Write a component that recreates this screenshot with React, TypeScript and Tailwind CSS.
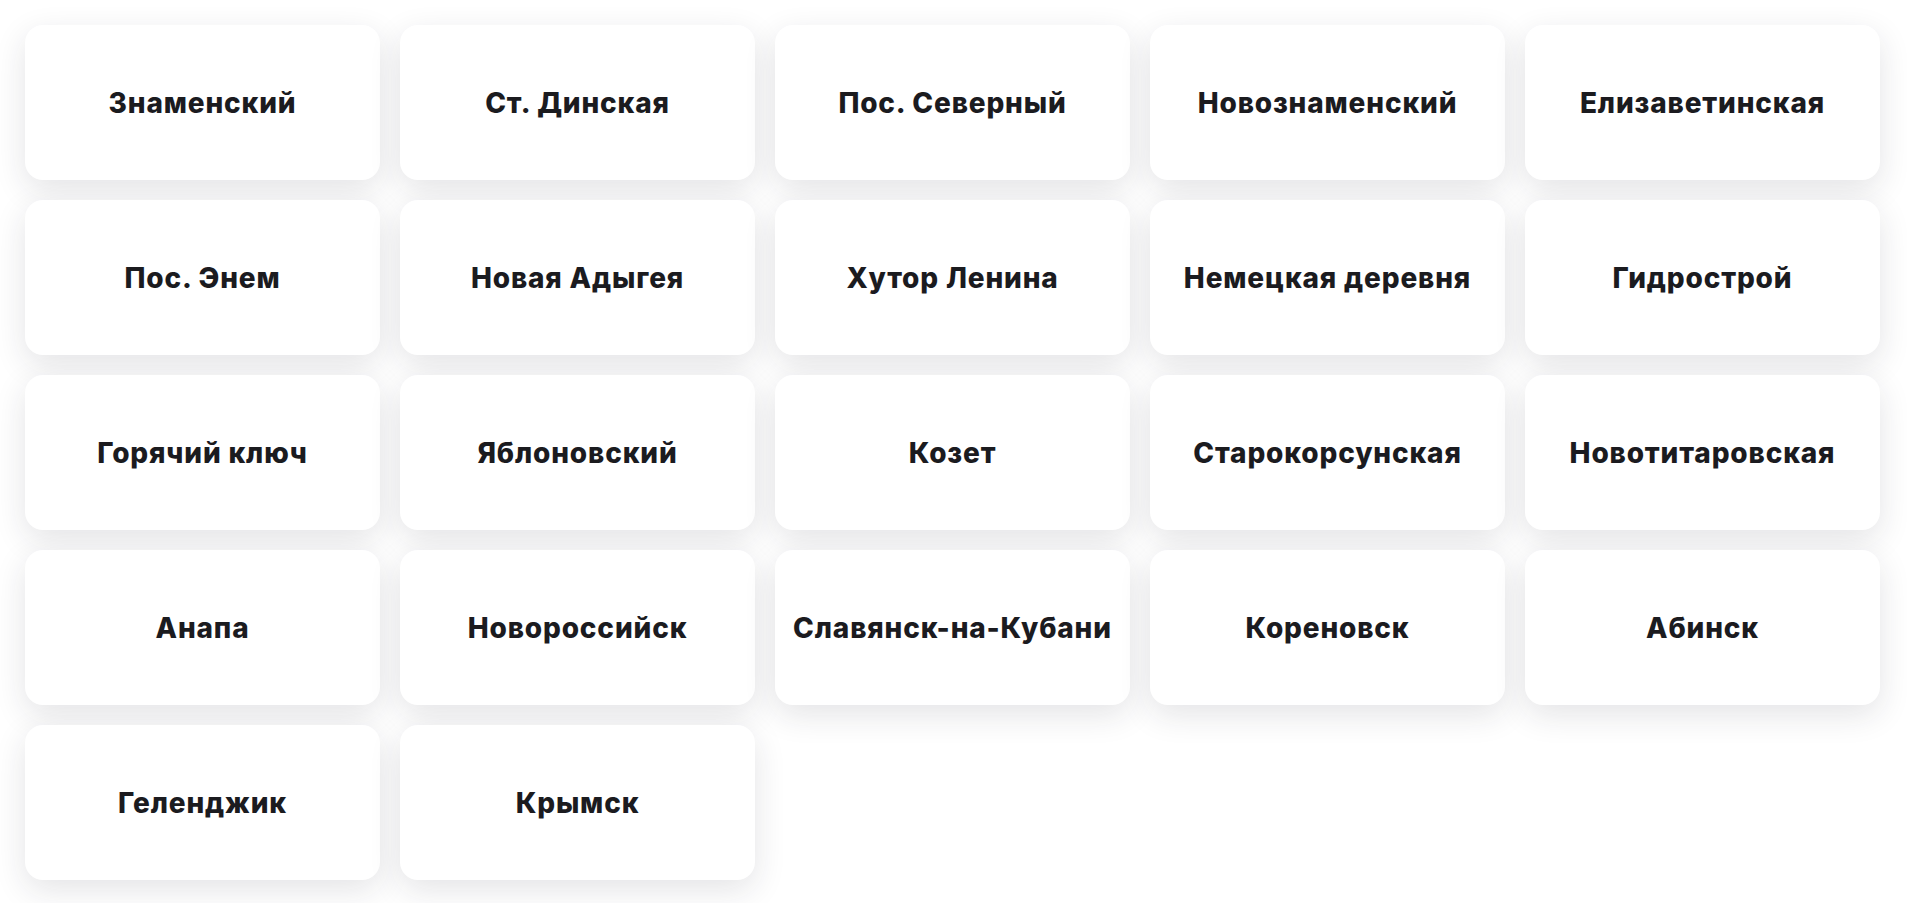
import React from 'react';

const places: string[] = [
  'Знаменский',
  'Ст. Динская',
  'Пос. Северный',
  'Новознаменский',
  'Елизаветинская',
  'Пос. Энем',
  'Новая Адыгея',
  'Хутор Ленина',
  'Немецкая деревня',
  'Гидрострой',
  'Горячий ключ',
  'Яблоновский',
  'Козет',
  'Старокорсунская',
  'Новотитаровская',
  'Анапа',
  'Новороссийск',
  'Славянск-на-Кубани',
  'Кореновск',
  'Абинск',
  'Геленджик',
  'Крымск',
];

const PlaceCard: React.FC<{ name: string }> = ({ name }) => (
  <div className="h-[155px] flex items-center justify-center rounded-[18px] bg-white shadow-[0_10px_32px_rgba(30,30,50,0.12)]">
    <span className="text-[28px] font-extrabold tracking-[0.03em] text-[#1b1b1f] whitespace-nowrap">
      {name}
    </span>
  </div>
);

export default function App() {
  return (
    <div className="min-h-[903px] bg-white font-['Inter','Noto_Sans',sans-serif]">
      <div className="grid grid-cols-5 gap-5 pt-[25px] pl-[25px] pr-[27px] pb-[23px]">
        {places.map((p) => (
          <PlaceCard key={p} name={p} />
        ))}
      </div>
    </div>
  );
}
